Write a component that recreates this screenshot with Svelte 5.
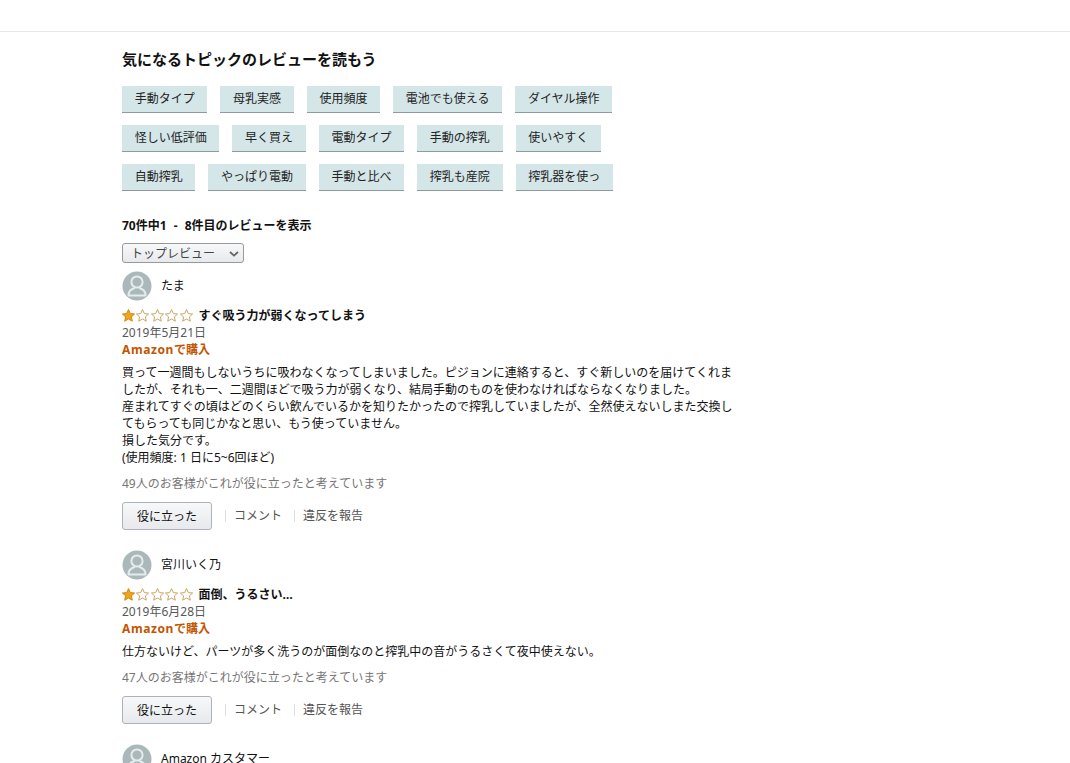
<script>
    const chipRows = [
        ["手動タイプ", "母乳実感", "使用頻度", "電池でも使える", "ダイヤル操作"],
        ["怪しい低評価", "早く買え", "電動タイプ", "手動の搾乳", "使いやすく"],
        ["自動搾乳", "やっぱり電動", "手動と比べ", "搾乳も産院", "搾乳器を使っ"]
    ];

    const reviews = [
        {
            name: "たま",
            title: "すぐ吸う力が弱くなってしまう",
            date: "2019年5月21日",
            body: [
                "買って一週間もしないうちに吸わなくなってしまいました。ピジョンに連絡すると、すぐ新しいのを届けてくれましたが、それも一、二週間ほどで吸う力が弱くなり、結局手動のものを使わなければならなくなりました。",
                "産まれてすぐの頃はどのくらい飲んでいるかを知りたかったので搾乳していましたが、全然使えないしまた交換してもらっても同じかなと思い、もう使っていません。",
                "損した気分です。",
                "(使用頻度: 1 日に5~6回ほど)"
            ],
            helpful: "49人のお客様がこれが役に立ったと考えています"
        },
        {
            name: "宮川いく乃",
            title: "面倒、うるさい…",
            date: "2019年6月28日",
            body: ["仕方ないけど、パーツが多く洗うのが面倒なのと搾乳中の音がうるさくて夜中使えない。"],
            helpful: "47人のお客様がこれが役に立ったと考えています"
        }
    ];

    const starPoints = "6.5,0.6 8.3,4.6 12.6,5 9.4,7.9 10.3,12.2 6.5,10 2.7,12.2 3.6,7.9 0.4,5 4.7,4.6";
</script>

{#snippet avatar()}
    <svg class="avatar" viewBox="0 0 30 30" aria-hidden="true">
        <circle cx="15" cy="15" r="14.5" fill="#abb8ba" />
        <circle cx="15" cy="11" r="5.6" fill="none" stroke="#e6ecec" stroke-width="2" />
        <path d="M6.5 24.5c0-4.6 3.6-6.6 5.6-7.2M23.5 24.5c0-4.6-3.6-6.6-5.6-7.2M6.5 24.5h17" fill="none" stroke="#e6ecec" stroke-width="2" stroke-linecap="round" />
    </svg>
{/snippet}

<div class="page">
    <main>
        <h2>気になるトピックのレビューを読もう</h2>

        <div class="chips">
            {#each chipRows as row}
                <div class="chip-row">
                    {#each row as chip}
                        <span class="chip">{chip}</span>
                    {/each}
                </div>
            {/each}
        </div>

        <h3>70件中1 - 8件目のレビューを表示</h3>

        <div class="sort">
            <select>
                <option>トップレビュー</option>
                <option>新しい順</option>
            </select>
            <svg class="chevron" viewBox="0 0 10 6" width="10" height="6" aria-hidden="true">
                <path d="M1 1l4 3.6L9 1" fill="none" stroke="#666" stroke-width="1.8" />
            </svg>
        </div>

        {#each reviews as review}
            <article>
                <div class="profile">
                    {@render avatar()}
                    <span>{review.name}</span>
                </div>
                <div class="title-row">
                    <span class="stars">
                        {#each [0, 1, 2, 3, 4] as i}
                            <svg viewBox="0 0 13 13" width="13" height="13" aria-hidden="true">
                                <polygon points={starPoints} fill={i === 0 ? "#f0a31c" : "#fff"} stroke={i === 0 ? "#d08a10" : "#c9a566"} stroke-width="1" />
                            </svg>
                        {/each}
                    </span>
                    <strong>{review.title}</strong>
                </div>
                <div class="date">{review.date}</div>
                <div class="purchase"><span>Amazon</span>で購入</div>
                <div class="body">
                    {#each review.body as line}
                        <div>{line}</div>
                    {/each}
                </div>
                <div class="helpful">{review.helpful}</div>
                <div class="actions">
                    <button>役に立った</button>
                    <span class="link">コメント</span>
                    <span class="link">違反を報告</span>
                </div>
            </article>
        {/each}

        <article>
            <div class="profile">
                {@render avatar()}
                <span>Amazon カスタマー</span>
            </div>
        </article>
    </main>
</div>

<style>
    :global(body) {
        margin: 0;
        background: #fff;
    }

    .page {
        height: 763px;
        overflow: hidden;
        font-family: "Noto Sans", "Noto Sans CJK JP", sans-serif;
        font-size: 12px;
        line-height: 17px;
        color: #111;
    }

    main {
        margin-top: 31px;
        border-top: 1px solid #e7e7e7;
        padding: 17px 0 0 122px;
    }

    h2 {
        margin: 0;
        font-size: 15px;
        line-height: 20px;
        font-weight: 700;
    }

    .chips {
        margin-top: 17px;
        display: flex;
        flex-direction: column;
        gap: 12px;
    }

    .chip-row {
        display: flex;
        gap: 13px;
    }

    .chip {
        height: 26px;
        line-height: 26px;
        padding: 0 12.7px;
        background: #d5e6e9;
        border-bottom: 1px solid #8f9a9c;
        color: #222;
        white-space: nowrap;
    }

    h3 {
        margin: 26px 0 0;
        font-size: 12px;
        line-height: 17px;
        font-weight: 700;
        word-spacing: 4px;
    }

    .sort {
        position: relative;
        width: 122px;
        margin-top: 9px;
    }

    select {
        display: block;
        width: 122px;
        height: 20px;
        padding: 0 8px;
        appearance: none;
        font: inherit;
        font-size: 12px;
        color: #444;
        background: linear-gradient(#f7f8fa, #e7e9ec);
        border: 1px solid #999;
        border-radius: 3px;
    }

    .chevron {
        position: absolute;
        right: 5px;
        top: 8px;
        pointer-events: none;
    }

    article {
        width: 614px;
        margin-bottom: 20px;
    }

    .sort + article {
        margin-top: 8px;
    }

    .profile {
        display: flex;
        align-items: center;
        gap: 9px;
        height: 30px;
    }

    .profile span {
        padding-bottom: 2px;
    }

    .avatar {
        width: 30px;
        height: 30px;
        flex: none;
    }

    .title-row {
        display: flex;
        align-items: center;
        margin-top: 6px;
        height: 17px;
    }

    .stars {
        display: flex;
        gap: 1.4px;
        margin-right: 6px;
    }

    .date {
        color: #565959;
    }

    .purchase {
        color: #c45500;
        font-weight: 700;
    }

    .purchase span {
        letter-spacing: 0.6px;
    }

    .body {
        margin-top: 6px;
    }

    .helpful {
        margin-top: 9px;
        color: #767676;
    }

    .actions {
        display: flex;
        align-items: center;
        margin-top: 10px;
    }

    button {
        width: 90px;
        height: 28px;
        padding: 0;
        font: inherit;
        color: #111;
        background: linear-gradient(#f7f8fa, #e7e9ec);
        border: 1px solid #adb1b8;
        border-radius: 3px;
        margin-right: 13px;
    }

    .link {
        color: #555;
        padding-left: 8px;
        margin-right: 12px;
        border-left: 1px solid #ddd;
        line-height: 12px;
    }
</style>
